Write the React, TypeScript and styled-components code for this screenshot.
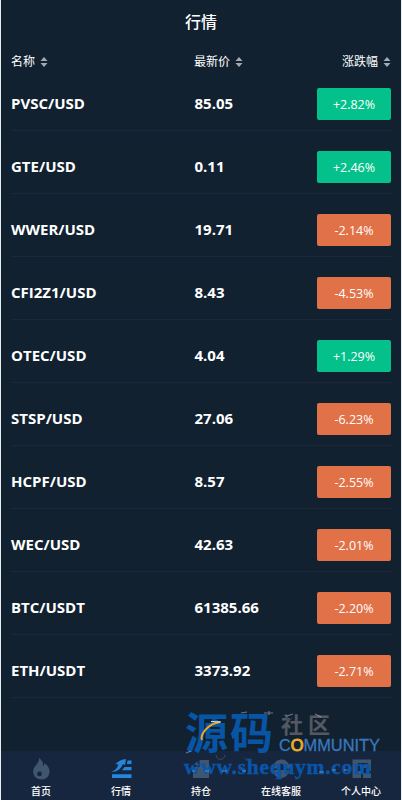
import React from "react";
import styled, { createGlobalStyle } from "styled-components";

const Global = createGlobalStyle`
  * { box-sizing: border-box; }
  body { margin: 0; background: #e9edf0; font-family: "Open Sans", "Noto Sans CJK SC", sans-serif; }
`;
const Page = styled.main`
  width: 400px; height: 800px; margin-left: 1px; position: relative; overflow: hidden;
  display: flex; flex-direction: column; background: #112130; color: #fff;
`;
const Title = styled.h1`
  margin: 0; height: 47px; line-height: 45px; text-align: center; font-size: 16px; font-weight: 500;
`;
const HeadRow = styled.div`
  display: grid; grid-template-columns: 183px 1fr auto; height: 21px; padding: 0 10px;
  align-items: center; font-size: 12px; line-height: 22px;
`;
const HeadCell = styled.div`
  display: flex; align-items: center; gap: 5px; height: 30px;
  svg { margin-top: -1px; }
`;
const List = styled.div` flex: 1; padding: 0 10px; `;
const Row = styled.div`
  display: grid; grid-template-columns: 183px 1fr 74px; align-items: center;
  height: 63px; padding: 20px 0 10px; border-bottom: 1px solid #1f2639;
  font-size: 15px; font-weight: 700; line-height: 30px;
`;
const Name = styled.span` height: 32px; `;
const Price = styled.span` height: 32px; padding-left: 0.5px; `;
const Badge = styled.span<{ $up: boolean }>`
  height: 32px; border-radius: 2px; text-align: center; font-size: 12.5px; font-weight: 400; line-height: 33px;
  background: ${(p) => (p.$up ? "#04c18b" : "#e17147")};
`;
const TabBar = styled.nav`
  height: 49px; display: grid; grid-template-columns: repeat(5, 1fr); background: #17263f;
`;
const Tab = styled.div`
  display: flex; flex-direction: column; align-items: center; padding-top: 7px;
  font-size: 10px; font-weight: 500; line-height: 14px;
  svg { display: block; margin-bottom: 4px; }
`;
const TabLabel = styled.span` position: relative; z-index: 2; `;
const Watermark = styled.svg` position: absolute; left: 179px; top: 695px; `;

const Sort = () => (
  <svg width="8" height="10" viewBox="0 0 8 10" fill="#a4aab1"><path d="M4 0 7.500 4h-7zM4 10 .5 6h7z" /></svg>
);

const rows: [string, string, string][] = [
  ["PVSC/USD", "85.05", "+2.82%"],
  ["GTE/USD", "0.11", "+2.46%"],
  ["WWER/USD", "19.71", "-2.14%"],
  ["CFI2Z1/USD", "8.43", "-4.53%"],
  ["OTEC/USD", "4.04", "+1.29%"],
  ["STSP/USD", "27.06", "-6.23%"],
  ["HCPF/USD", "8.57", "-2.55%"],
  ["WEC/USD", "42.63", "-2.01%"],
  ["BTC/USDT", "61385.66", "-2.20%"],
  ["ETH/USDT", "3373.92", "-2.71%"],
];

const icons = [
  <path key="fire" fill="#41556e" fillRule="evenodd" d="M8 0c2.800 2.200 4.500 4.300 4 8 1-.5 1.500-1.700 1.500-3C16.500 7 18.500 10 18.500 13.500c0 5-3.500 8-8 8s-8.300-3-8.300-8C2.200 8 8.500 5.500 8 0zM8.500 13.500a2.400 2.400 0 1 0 0 4.800 2.400 2.400 0 0 0 0-4.800z" />,
  <g key="market" fill="#2486dc">
    <path d="M0 14C4 12.500 6 10.500 7.500 6.500L4.500 6C7.500 3 11 1.200 15 1l-1 6-2-1C10 11 6 14 0 14z" />
    <path d="M16.500 2.500h4V6h-4.500zM13.500 9h7v3.300H11zM1 16.300h19.500V20H1z" />
  </g>,
  <path key="hold" fill="#41556e" d="M8.500 2H18v18H2V9h6.500zM6.500 3v4H3z" />,
  <path key="support" fill="#41556e" d="M8 2c4.500-1.500 9 1 10 5l2-.5-2.500 5-4.500-3 2-.5c-3-4-9-2-9 2.500H2C2 6.500 4 3 8 2zM2 12h16c0 4-3 8-8 8s-8-4-8-8z" />,
  <path key="me" fill="#41556e" fillRule="evenodd" d="M1.500 1.500H20V13h-5v-1h2V5H7v8h3v7H1.500zM9 7h6v3H9zM12 15h8v5h-8z" />,
];
const labels = ["首页", "行情", "持仓", "在线客服", "个人中心"];

export default function App() {
  return (
    <>
      <Global />
      <Page>
        <Title>行情</Title>
        <HeadRow>
          <HeadCell>名称 <Sort /></HeadCell>
          <HeadCell>最新价 <Sort /></HeadCell>
          <HeadCell>涨跌幅 <Sort /></HeadCell>
        </HeadRow>
        <List>
          {rows.map(([name, price, change]) => (
            <Row key={name}>
              <Name>{name}</Name>
              <Price>{price}</Price>
              <Badge $up={change[0] === "+"}>{change}</Badge>
            </Row>
          ))}
        </List>
        <TabBar>
          {labels.map((label, i) => (
            <Tab key={label}>
              <svg width="21" height="22" viewBox="0 0 21 22">{icons[i]}</svg>
              <TabLabel>{label}</TabLabel>
            </Tab>
          ))}
        </TabBar>
        <Watermark width="215" height="90" viewBox="0 -10 215 90">
          <g fontFamily="Noto Sans CJK SC, sans-serif" fontWeight="700">
            <text x="5" y="44" fontSize="43" fill="#0854a5" textLength="88">源码</text>
            <text x="101" y="28" fontSize="22" fill="#545860" textLength="49">社区</text>
          </g>
          <path d="M22 35c-2-5 5-16 18-18" fill="none" stroke="#f0a91f" strokeWidth="2" />
          <path d="M31 16.500l10 .5" stroke="#dbe6f0" strokeWidth="1" />
          <text x="99" y="46" fontSize="16" fill="#3978bd" stroke="#3978bd" strokeWidth=".3" fontFamily="Liberation Sans, sans-serif" textLength="101" lengthAdjust="spacingAndGlyphs">
            C<tspan fill="#e6ac2d" stroke="#e6ac2d" strokeWidth="1">O</tspan>MMUNITY
          </text>
          <text x="4" y="69" fontSize="21.500" fontWeight="700" fill="#0756aa" stroke="#0756aa" strokeWidth=".4" fontFamily="Liberation Serif, serif" textLength="187" lengthAdjust="spacing">www.shequym.com</text>
          <path d="M61 8l6-1M84 8h9m-4-2v4m18 1l6-2m22 0l6 3M6 48l5-2M12 66h3m10 0h4m13 0h5m15 0h4m73 1h5m8-2h4m8 0h4" stroke="#d5dde5" strokeWidth="1.200" opacity=".45" fill="none" />
          <path d="M36 50c1 6 8 6 9 0M65 53l2 3M106 13c2 2 5 2 6 0" stroke="#344860" fill="none" />
        </Watermark>
      </Page>
    </>
  );
}
